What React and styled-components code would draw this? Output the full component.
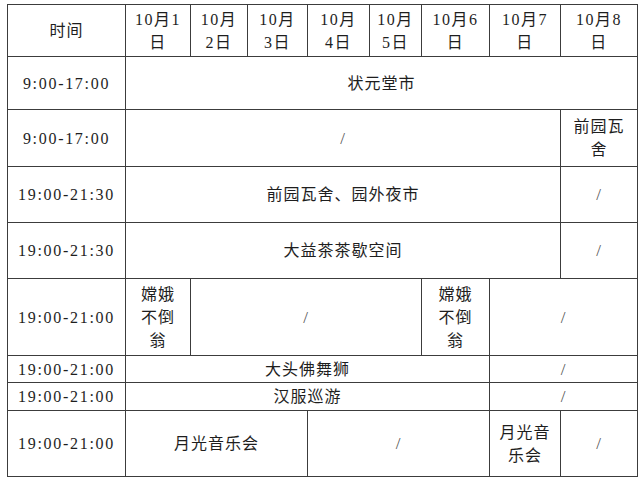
import styled, { createGlobalStyle } from "styled-components";

const GlobalStyle = createGlobalStyle`
    html, body {
        margin: 0;
        padding: 0;
        background: #ffffff;
    }
`;

const cols = [118, 65, 57, 60, 62, 52, 68, 71, 77];

const dates = [
    ["10月1", "日"],
    ["10月", "2日"],
    ["10月", "3日"],
    ["10月", "4日"],
    ["10月", "5日"],
    ["10月6", "日"],
    ["10月7", "日"],
    ["10月8", "日"],
];

// each row: time, height, cells [text, span]
const rows = [
    { time: "9:00-17:00", h: 53, cells: [["状元堂市", 8]] },
    { time: "9:00-17:00", h: 57, cells: [["/", 7], [["前园瓦", "舍"], 1]] },
    { time: "19:00-21:30", h: 56, cells: [["前园瓦舍、园外夜市", 7], ["/", 1]] },
    { time: "19:00-21:30", h: 56, cells: [["大益茶茶歇空间", 7], ["/", 1]] },
    {
        time: "19:00-21:00",
        h: 77,
        cells: [
            [["嫦娥", "不倒", "翁"], 1],
            ["/", 4],
            [["嫦娥", "不倒", "翁"], 1],
            ["/", 2],
        ],
    },
    { time: "19:00-21:00", h: 27, cells: [["大头佛舞狮", 6], ["/", 2]] },
    { time: "19:00-21:00", h: 28, cells: [["汉服巡游", 6], ["/", 2]] },
    {
        time: "19:00-21:00",
        h: 66,
        cells: [
            ["月光音乐会", 3],
            ["/", 3],
            [["月光音", "乐会"], 1],
            ["/", 1],
        ],
    },
];

function Lines({ text }) {
    if (!Array.isArray(text)) return text === "/" ? <Slash>/</Slash> : text;
    return text.map((t, i) => <Line key={i}>{t}</Line>);
}

export default function App() {
    return (
        <Page>
            <GlobalStyle />
            <Table>
                <colgroup>
                    {cols.map((w, i) => (
                        <col key={i} style={{ width: w }} />
                    ))}
                </colgroup>
                <thead>
                    <Row $h={52}>
                        <Cell>时间</Cell>
                        {dates.map((d, i) => (
                            <Cell key={i} $wide>
                                <Lines text={d} />
                            </Cell>
                        ))}
                    </Row>
                </thead>
                <tbody>
                    {rows.map((r, i) => (
                        <Row key={i} $h={r.h}>
                            <Cell $time>{r.time}</Cell>
                            {r.cells.map(([text, span], j) => (
                                <Cell key={j} colSpan={span}>
                                    <Lines text={text} />
                                </Cell>
                            ))}
                        </Row>
                    ))}
                </tbody>
            </Table>
        </Page>
    );
}

const Page = styled.div`
    padding: 4px 0 0 7px;
    width: 640px;
    height: 480px;
    box-sizing: border-box;
    overflow: hidden;
`;

const Table = styled.table`
    table-layout: fixed;
    border-collapse: collapse;
    width: 630px;
    font-family: "Liberation Serif", "Noto Sans CJK SC", serif;
    font-size: 16px;
    color: #1e1e1e;
`;

const Row = styled.tr`
    height: ${(props) => props.$h}px;
`;

const Cell = styled.td`
    border: 1px solid #3c3c3c;
    padding: 0;
    text-align: center;
    vertical-align: middle;
    line-height: 23px;
    letter-spacing: ${(props) => (props.$time ? "1.7px" : props.$wide ? "1.5px" : "1px")};
`;

const Line = styled.div`
    line-height: 23px;
`;

const Slash = styled.span`
    display: inline-block;
    font-size: 17px;
    color: #555;
`;
